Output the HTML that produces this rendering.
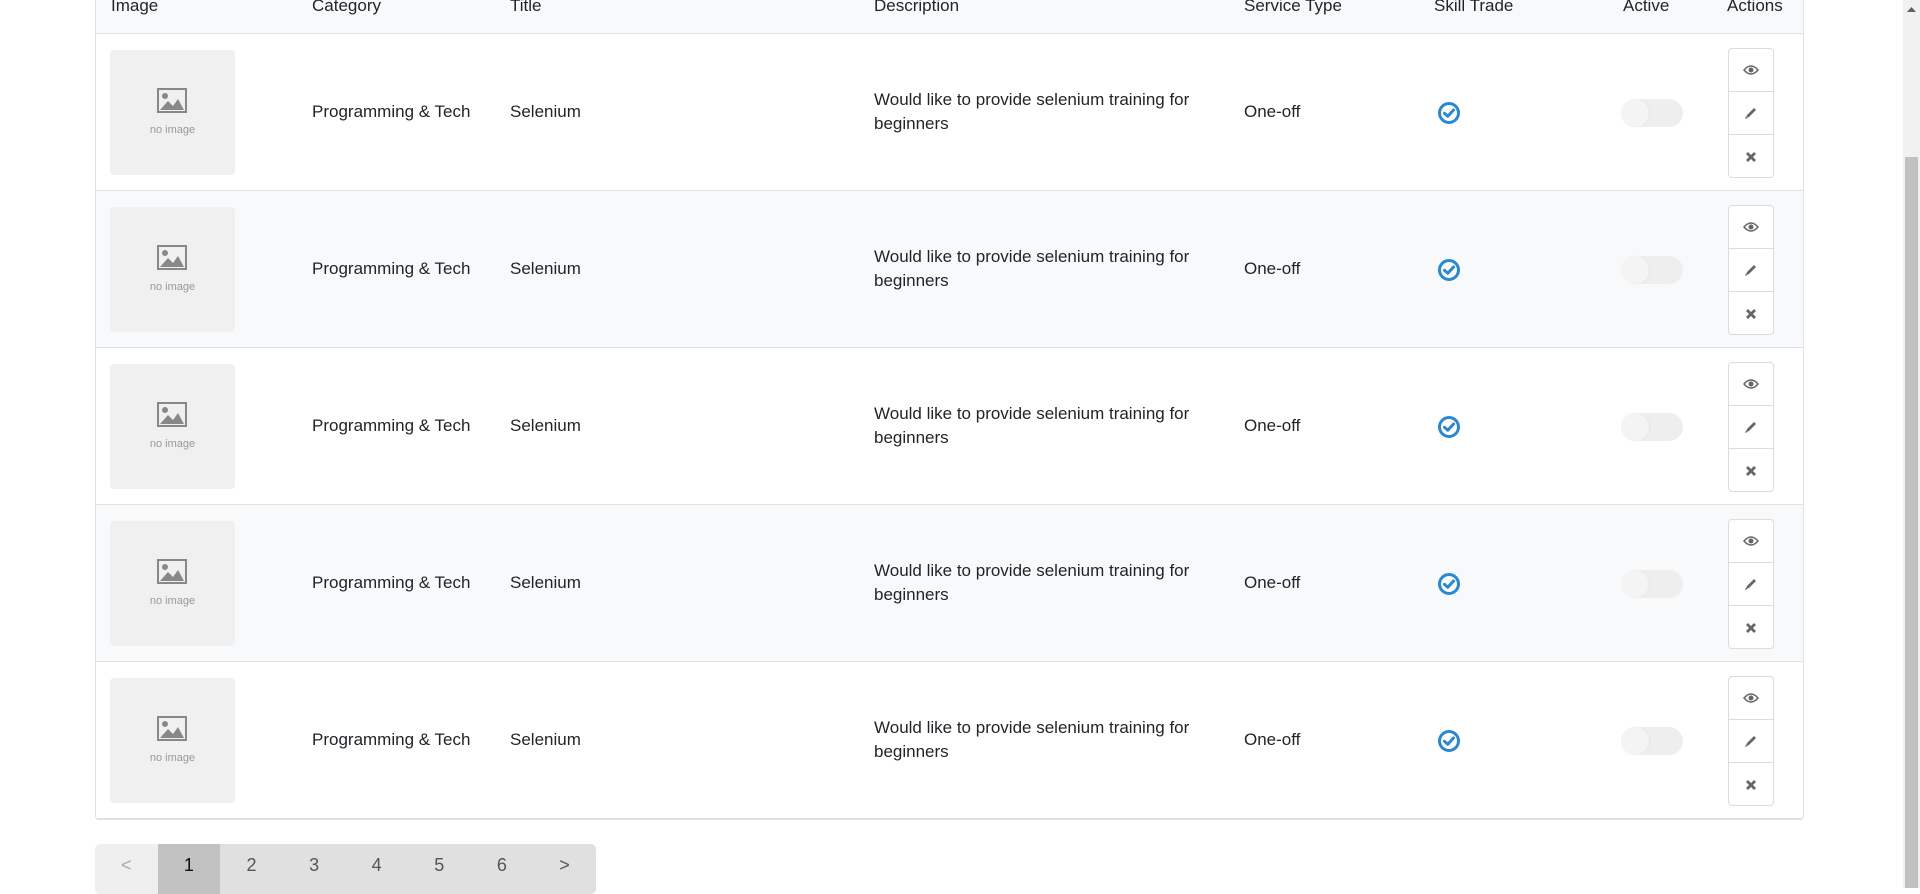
<!DOCTYPE html>
<html><head><meta charset="utf-8"><style>
*{box-sizing:border-box;margin:0;padding:0}
body{width:1920px;height:888px;overflow:hidden;background:#fff;font-family:"Liberation Sans",sans-serif;color:#212529;position:relative}
.tbl{position:absolute;left:95px;top:-10px;width:1709px;height:830px;border:1px solid #dee2e6;border-top:none;border-radius:0 0 4px 4px;overflow:hidden}
.hdr{position:absolute;left:0;top:0;width:100%;height:44px;background:#f8f9fa;border-bottom:1px solid #dee2e6}
.h{position:absolute;top:4px;font-size:17px;line-height:24px;color:#212529}
.row{position:absolute;left:0;width:100%;height:157px;border-bottom:1px solid #dee2e6}
.row.alt{background:#f8f9fa}
.img{position:absolute;left:14px;top:16px;width:125px;height:125px;background:#f0f0f0;border-radius:4px}
.img svg{position:absolute;left:47px;top:38px}
.img span{position:absolute;left:0;width:100%;top:74px;text-align:center;font-size:11px;color:#999}
.t{position:absolute;font-size:17px;line-height:24px;top:66px}
.d{position:absolute;left:778px;top:54px;font-size:17px;line-height:24px;width:340px}
.chk{position:absolute;left:1341px;top:67px}
.tog{position:absolute;left:1525px;top:65px;width:62px;height:28px;border-radius:14px;background:#eeeeee}
.tog i{position:absolute;left:0;top:0;width:28px;height:28px;border-radius:14px;background:#f4f4f4;box-shadow:1px 0 2px rgba(0,0,0,.04)}
.act{position:absolute;left:1632px;top:14px;width:46px;height:130px;border:1px solid #dcdcdc;border-radius:4px;background:#fff}
.act div{height:43px;border-bottom:1px solid #dcdcdc;display:flex;align-items:center;justify-content:center}
.act div:last-child{border-bottom:none}
.pg{position:absolute;left:95px;top:844px;height:50px;display:flex;border-radius:5px;overflow:hidden}
.pg div{width:62.6px;background:#e0e0e0;text-align:center;line-height:42px;font-size:18px;color:#555}
.pg div.p{background:#efefef;color:#aaa}
.pg div.a{background:#c2c2c2;color:#111}
.sb{position:absolute;left:1903px;top:0;width:17px;height:888px;background:#f1f1f1}
.sb .th{position:absolute;left:2px;top:157px;width:13px;height:731px;background:#c1c1c1}
</style></head><body>
<div class="tbl">
<div class="hdr">
<div class="h" style="left:15px">Image</div>
<div class="h" style="left:216px">Category</div>
<div class="h" style="left:414px">Title</div>
<div class="h" style="left:778px">Description</div>
<div class="h" style="left:1148px">Service Type</div>
<div class="h" style="left:1338px">Skill Trade</div>
<div class="h" style="left:1527px">Active</div>
<div class="h" style="left:1631px">Actions</div>
</div>
</div>
<div class="pg"><div class="p">&lt;</div><div class="a">1</div><div>2</div><div>3</div><div>4</div><div>5</div><div>6</div><div>&gt;</div></div>
<div class="sb"><svg style="position:absolute;left:4px;top:7px" width="9" height="6"><path d="M0 5L4.5 0L9 5Z" fill="#606060"/></svg><div class="th"></div></div>
<script>
var h='';
for(var i=0;i<5;i++){
h+='<div class="row'+(i%2?' alt':'')+'" style="top:'+(44+i*157)+'px">'+
'<div class="img"><svg width="30" height="25" viewBox="0 0 30 25"><rect x="1" y="1" width="28" height="23" fill="none" stroke="#888" stroke-width="2"/><circle cx="8" cy="8" r="3" fill="#888"/><path d="M3 22L11 13L16 18L21 11L27 22Z" fill="#888"/></svg><span>no image</span></div>'+
'<div class="t" style="left:216px">Programming &amp; Tech</div>'+
'<div class="t" style="left:414px">Selenium</div>'+
'<div class="d">Would like to provide selenium training for beginners</div>'+
'<div class="t" style="left:1148px">One-off</div>'+
'<div class="chk"><svg width="24" height="24" viewBox="0 0 24 24"><circle cx="12" cy="12" r="9.5" fill="none" stroke="#2b88d0" stroke-width="3"/><path d="M7.5 12.3L10.8 15.3L16.5 9" fill="none" stroke="#2b88d0" stroke-width="3" stroke-linecap="round" stroke-linejoin="round"/></svg></div>'+
'<div class="tog"><i></i></div>'+
'<div class="act"><div><svg width="16" height="10" viewBox="0 0 16 10"><path d="M1 5Q8 -3 15 5Q8 13 1 5Z" fill="none" stroke="#666" stroke-width="1.5"/><circle cx="8" cy="5" r="2.5" fill="#666"/></svg></div>'+
'<div><svg width="14" height="14" viewBox="0 0 14 14"><path d="M2 12L3 9L10 2L12 4L5 11Z" fill="#666"/><path d="M1 13L2 10.5L3.5 12Z" fill="#666"/></svg></div>'+
'<div><svg width="12" height="12" viewBox="0 0 12 12"><path d="M2 2L10 10M10 2L2 10" stroke="#666" stroke-width="2.8"/></svg></div></div>'+
'</div>';
}
document.querySelector('.tbl').insertAdjacentHTML('beforeend',h);
</script>
</body></html>
